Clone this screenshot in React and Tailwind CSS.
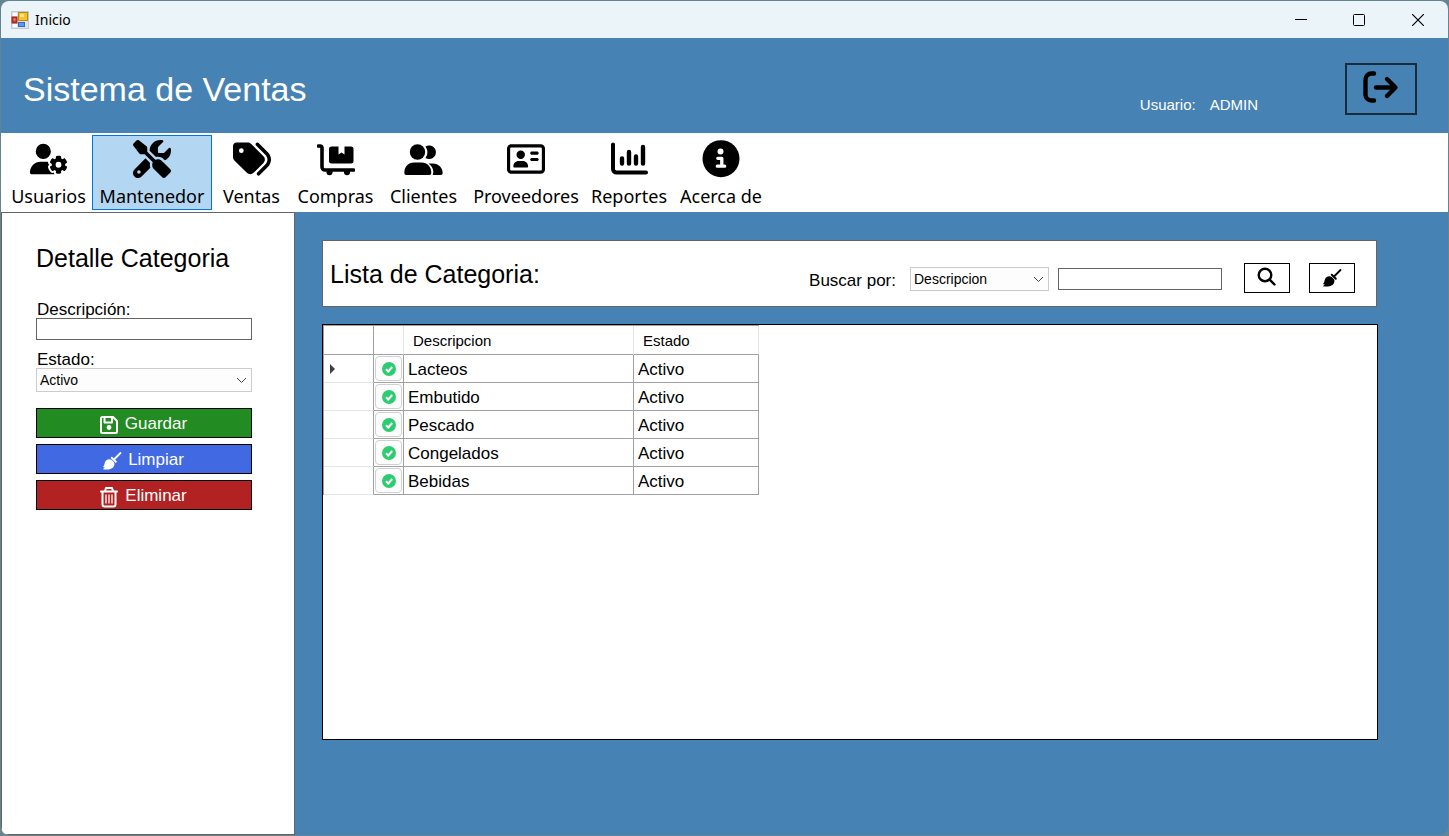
import React from "react";
import {
  FaUserGear,
  FaScrewdriverWrench,
  FaTags,
  FaRegAddressCard,
} from "react-icons/fa6";

function AppIcon() {
  return (
    <svg width="18" height="18" viewBox="0 0 18 18" aria-hidden="true">
      <rect x="0.5" y="0.5" width="17" height="17" fill="#dfe2e4" stroke="#c3c8cb" />
      <rect x="2" y="2" width="4" height="3" fill="#fff" />
      <rect x="2" y="13" width="4" height="3" fill="#fff" />
      <rect x="1" y="6" width="5" height="6" fill="#c2382e" stroke="#9c231b" />
      <rect x="2.5" y="7.5" width="2" height="2" fill="#e98d80" />
      <rect x="7.5" y="1.5" width="9" height="8" fill="#f5c22c" stroke="#b9881a" />
      <rect x="9" y="3" width="4" height="3" fill="#fbe48d" />
      <rect x="7.5" y="11.5" width="6" height="4" fill="#5c97ea" stroke="#3268bd" />
    </svg>
  );
}

function CartIcon() {
  return (
    <svg width="38" height="38" viewBox="0 0 38 38" aria-hidden="true">
      <path d="M1.500 6H3a2 2 0 0 1 2 1.700V27a3 3 0 0 0 3 3h28.500" fill="none" stroke="currentColor" strokeWidth="3.600" strokeLinecap="round" />
      <path d="M14.500 6.500h4v7.500l3-2 3 2V6.500h9.500a2.500 2.500 0 0 1 2.500 2.500v12a2.500 2.500 0 0 1-2.500 2.500H14.500A2.500 2.500 0 0 1 12 21V9a2.500 2.500 0 0 1 2.500-2.500z" fill="none" />
      <path d="M14.500 6.500H21.500v8l3-2 3 2v-8H34a2.500 2.500 0 0 1 2.500 2.500v12a2.500 2.500 0 0 1-2.500 2.500H14.500A2.500 2.500 0 0 1 12 21V9a2.500 2.500 0 0 1 2.500-2.500z" fill="currentColor" />
      <circle cx="12.500" cy="32.300" r="3" fill="currentColor" />
      <circle cx="30" cy="32.300" r="3" fill="currentColor" />
    </svg>
  );
}

function PeopleIcon() {
  return (
    <svg width="39" height="38" viewBox="0 0 39 38" fill="currentColor" aria-hidden="true">
      <circle cx="13.500" cy="12" r="7.700" />
      <path d="M21.500 6.500a6.800 6.800 0 1 1 0 11.500a10 10 0 0 0 0-11.500z" />
      <path d="M10 22.500h7.500c6 0 9.800 4.500 9.800 10.500a2 2 0 0 1-2 2H2.300a2 2 0 0 1-2-2c0-6 3.700-10.500 9.700-10.500z" />
      <path d="M24.500 23.500h4.500c5.500 0 9.700 4.300 9.700 9.500a2 2 0 0 1-2 2h-8c1.600-3.700 0-8.500-4.200-11.500z" />
    </svg>
  );
}

function InfoIcon() {
  return (
    <svg width="38" height="38" viewBox="0 0 38 38" aria-hidden="true">
      <circle cx="19" cy="18.700" r="18.500" fill="currentColor" />
      <circle cx="18.500" cy="11.500" r="3" fill="#fff" />
      <path d="M15.800 18.300h4v7.500M15.300 26.200h7.400" fill="none" stroke="#fff" strokeWidth="3.300" strokeLinecap="round" strokeLinejoin="round" />
    </svg>
  );
}

function ChartIcon() {
  return (
    <svg width="38" height="38" viewBox="0 0 38 38" fill="none" stroke="currentColor" strokeLinecap="round" aria-hidden="true">
      <path d="M3 4.500V29a3.500 3.500 0 0 0 3.500 3.500H36" strokeWidth="4" />
      <path d="M12 18.500v5M19 12v11.500M26 16.500v7M33 7v16.500" strokeWidth="4.400" />
    </svg>
  );
}

function LogoutIcon() {
  return (
    <svg width="38" height="34" viewBox="0 0 38 34" fill="none" stroke="#000" strokeWidth="4.400" strokeLinecap="round" strokeLinejoin="round" aria-hidden="true">
      <path d="M12 3.500H9.500a6 6 0 0 0-6 6v15a6 6 0 0 0 6 6H12" />
      <path d="M14 17.500h18" />
      <path d="M25 9l8.500 8.500L25 26" />
    </svg>
  );
}

function SearchIcon() {
  return (
    <svg width="20" height="20" viewBox="0 0 20 20" fill="none" stroke="#000" strokeWidth="2.400" strokeLinecap="round" aria-hidden="true">
      <circle cx="8" cy="8" r="6.300" />
      <path d="M12.700 12.700l4.800 4.800" />
    </svg>
  );
}

function BroomIcon({ className }) {
  return (
    <svg className={className} width="20" height="20" viewBox="0 0 20 20" aria-hidden="true">
      <path d="M18.500 2L12.500 8" stroke="currentColor" strokeWidth="1.800" strokeLinecap="round" />
      <path d="M9.800 6.700l4 4" stroke="currentColor" strokeWidth="2" strokeLinecap="round" />
      <path d="M7.300 8.300c1 0 1.700.2 2.400.8l2 2c.7.700.9 1.600.7 2.700-.4 2-1.700 3.600-4 4.200-2.200.6-4.900.6-7.400.3l1.800-2.300-2 .3c1.300-1.300 1.500-2.700 2-4.500.6-2.200 2.300-3.500 4.500-3.500z" fill="currentColor" />
    </svg>
  );
}

function SaveIcon({ className }) {
  return (
    <svg className={className} width="20" height="20" viewBox="0 0 20 20" fill="none" stroke="currentColor" strokeWidth="2" strokeLinejoin="round" aria-hidden="true">
      <path d="M3.500 2H14l4 4v10.500a1.500 1.500 0 0 1-1.500 1.500h-13A1.500 1.500 0 0 1 2 16.500v-13A1.500 1.500 0 0 1 3.500 2z" />
      <path d="M5.500 2.500V7.500h7.500V2.500" />
      <circle cx="10" cy="12.500" r="2.400" fill="currentColor" stroke="none" />
    </svg>
  );
}

function TrashIcon({ className }) {
  return (
    <svg className={className} width="20" height="22" viewBox="0 0 20 22" fill="none" stroke="currentColor" strokeWidth="2" strokeLinecap="round" strokeLinejoin="round" aria-hidden="true">
      <path d="M2 5.500h16M6 5l1-3h6l1 3" />
      <path d="M3.500 6v12.500a2 2 0 0 0 2 2h9a2 2 0 0 0 2-2V6" />
      <path d="M7 9v8M10 9v8M13 9v8" strokeWidth="1.300" />
    </svg>
  );
}

function CheckIcon() {
  return (
    <svg width="14" height="14" viewBox="0 0 14 14" aria-hidden="true">
      <circle cx="7" cy="7" r="7" fill="#2ecc71" />
      <path d="M4 7.300l2.200 2.200L10.200 5" fill="none" stroke="#fff" strokeWidth="2" />
    </svg>
  );
}

function Dropdown({ id, value, className }) {
  return (
    <div className={"relative " + className}>
      <select
        id={id}
        defaultValue={value}
        className="block h-6 w-full appearance-none border border-[#cccccc] bg-[#fdfdfd] pl-[3px] pr-6 text-sm leading-5 text-black"
      >
        <option>{value}</option>
      </select>
      <svg className="pointer-events-none absolute right-[5px] top-2" width="11" height="8" viewBox="0 0 11 8" fill="none" stroke="#444" aria-hidden="true">
        <path d="M1 2l4.500 4.500L10 2" />
      </svg>
    </div>
  );
}

const menu = [
  { name: "Usuarios", icon: <FaUserGear size={38} />, width: "w-[87px]" },
  { name: "Mantenedor", icon: <FaScrewdriverWrench size={38} />, width: "w-[120px]", active: true },
  { name: "Ventas", icon: <FaTags size={38} />, width: "w-[79px]" },
  { name: "Compras", icon: <CartIcon />, width: "w-[89px]" },
  { name: "Clientes", icon: <PeopleIcon />, width: "w-[87px]" },
  { name: "Proveedores", icon: <FaRegAddressCard size={38} />, width: "w-[118px]" },
  { name: "Reportes", icon: <ChartIcon />, width: "w-[88px]" },
  { name: "Acerca de", icon: <InfoIcon />, width: "w-[96px]" },
];

const rows = ["Lacteos", "Embutido", "Pescado", "Congelados", "Bebidas"];

export default function App() {
  return (
    <div className="flex min-h-screen bg-[#64848f] p-px font-['Liberation_Sans',Arial,sans-serif] text-black">
      <div className="flex flex-1 flex-col overflow-hidden rounded-lg bg-[#4682b4]">
        <header className="flex h-[37px] items-center bg-[#ebf4f8] pl-[10px] font-['Noto_Sans',sans-serif]">
          <AppIcon />
          <span className="ml-[6px] flex-1 text-sm">Inicio</span>
          <button aria-label="Minimizar" className="flex h-9 w-[58px] items-center justify-center">
            <svg width="12" height="12" viewBox="0 0 12 12" stroke="#000"><path d="M0 5.500h12" /></svg>
          </button>
          <button aria-label="Maximizar" className="flex h-9 w-[58px] items-center justify-center">
            <svg width="12" height="12" viewBox="0 0 12 12" fill="none" stroke="#000"><rect x="0.500" y="0.500" width="11" height="11" rx="1" /></svg>
          </button>
          <button aria-label="Cerrar" className="flex h-9 w-[60px] items-center justify-center">
            <svg width="12" height="12" viewBox="0 0 12 12" stroke="#000" strokeWidth="1.200"><path d="M0 0l12 12M12 0L0 12" /></svg>
          </button>
        </header>

        <div className="flex h-[95px] items-center pl-[22px] pr-[31px] text-white">
          <h1 className="flex-1 pt-[6px] text-[34px] leading-10">Sistema de Ventas</h1>
          <p className="mr-[87px] flex gap-[14px] pt-[38px] text-[15px] leading-5">
            <span>Usuario:</span>
            <span>ADMIN</span>
          </p>
          <button aria-label="Salir" className="mt-[7px] flex h-[52px] w-[72px] items-center justify-center border-2 border-[#182c3d] pb-1">
            <LogoutIcon />
          </button>
        </div>

        <nav className="flex h-[79px] bg-white py-[2px] pl-1 font-['Noto_Sans',sans-serif]">
          {menu.map((item) => (
            <button
              key={item.name}
              className={
                "flex h-[75px] shrink-0 flex-col items-center border pt-[4px] text-lg leading-6 " +
                item.width +
                (item.active ? " border-[#0078d7] bg-[#b3d7f3]" : " border-transparent")
              }
            >
              <span className="flex h-[38px] items-center">{item.icon}</span>
              <span className="mt-[6px] whitespace-nowrap">{item.name}</span>
            </button>
          ))}
        </nav>

        <div className="flex flex-1">
          <aside className="w-[294px] shrink-0 border border-[#646464] bg-white pl-[34px] pr-[42px] pt-[29px]">
            <h2 className="text-[25px] leading-8">Detalle Categoria</h2>
            <form className="mt-[27px]" onSubmit={(e) => e.preventDefault()}>
              <label htmlFor="descripcion" className="block pl-px text-[17px] leading-[17px]">Descripción:</label>
              <input id="descripcion" type="text" className="block h-[22px] w-full border border-[#646464] bg-white px-1 text-sm" />
              <label htmlFor="estado" className="mt-[11px] block pl-px text-[17px] leading-[17px]">Estado:</label>
              <Dropdown id="estado" value="Activo" className="w-full" />
              <div className="mt-4 flex flex-col gap-[6px] text-[17px] leading-5 text-white">
                <button className="flex h-[30px] items-center justify-center gap-[6px] border border-black bg-[#228b22] pr-[2px] pt-px">
                  <SaveIcon className="mt-[3px]" />Guardar
                </button>
                <button className="flex h-[30px] items-center justify-center gap-[6px] border border-black bg-[#4169e1] pr-[2px] pt-px">
                  <BroomIcon className="mt-[3px]" />Limpiar
                </button>
                <button className="flex h-[30px] items-center justify-center gap-[6px] border border-black bg-[#b22222] pr-[2px] pt-px">
                  <TrashIcon className="mt-[3px]" />Eliminar
                </button>
              </div>
            </form>
          </aside>

          <main className="flex min-w-0 flex-1 flex-col pb-[95px] pl-[27px] pr-[70px] pt-7">
            <section className="mr-px flex h-[67px] items-center border border-[#646464] bg-white pl-[7px] pr-[21px]">
              <h2 className="flex-1 text-[25px] leading-8">Lista de Categoria:</h2>
              <label htmlFor="filtro" className="mr-[14px] mt-[14px] text-[17px] leading-5">Buscar por:</label>
              <Dropdown id="filtro" value="Descripcion" className="mr-[9px] mt-[10px] w-[139px]" />
              <input aria-label="Texto a buscar" type="text" className="mr-[22px] mt-[10px] h-[22px] w-[164px] border border-[#646464] bg-white px-1 text-sm" />
              <button aria-label="Buscar" className="mr-[19px] mt-2 flex h-[30px] w-[46px] items-center justify-center border border-black pb-px">
                <SearchIcon />
              </button>
              <button aria-label="Limpiar filtro" className="mt-2 flex h-[30px] w-[46px] items-center justify-center border border-black">
                <BroomIcon />
              </button>
            </section>

            <section className="mt-[17px] flex-1 border border-black bg-white">
              <table className="w-[436px] table-fixed border-separate border-spacing-0 border-l border-t border-[#a0a0a0] text-left text-[17px] leading-5">
                <colgroup>
                  <col className="w-[50px]" />
                  <col className="w-[30px]" />
                  <col className="w-[230px]" />
                  <col className="w-[125px]" />
                </colgroup>
                <thead>
                  <tr className="h-[29px] text-[15px]">
                    <th className="border-b border-r border-[#a0a0a0] p-0"></th>
                    <th className="border-b border-r border-b-[#a0a0a0] border-r-[#e5e5e5] p-0"></th>
                    <th className="border-b border-r border-b-[#a0a0a0] border-r-[#e5e5e5] pb-0 pl-[9px] pr-0 pt-[2px] font-normal">Descripcion</th>
                    <th className="border-b border-r border-b-[#a0a0a0] border-r-[#e5e5e5] pb-0 pl-[9px] pr-0 pt-[2px] font-normal">Estado</th>
                  </tr>
                </thead>
                <tbody>
                  {rows.map((name, i) => (
                    <tr key={name} className="h-7">
                      <td className="border-b border-r border-b-[#e5e5e5] border-r-[#a0a0a0] py-0 pl-[6px] pr-0">
                        {i === 0 && (
                          <svg width="5" height="10" viewBox="0 0 5 10" aria-hidden="true"><path d="M0 0l5 5-5 5z" fill="#404040" /></svg>
                        )}
                      </td>
                      <td className="border-b border-r border-[#a0a0a0] p-px">
                        <button aria-label={"Seleccionar " + name} className="flex h-[25px] w-[27px] items-center justify-center rounded border border-[#d0d0d0] bg-[#fdfdfd]">
                          <CheckIcon />
                        </button>
                      </td>
                      <td className="border-b border-r border-[#a0a0a0] pb-0 pl-1 pr-0 pt-[2px]">{name}</td>
                      <td className="border-b border-r border-[#a0a0a0] pb-0 pl-1 pr-0 pt-[2px]">Activo</td>
                    </tr>
                  ))}
                </tbody>
              </table>
            </section>
          </main>
        </div>
      </div>
    </div>
  );
}
